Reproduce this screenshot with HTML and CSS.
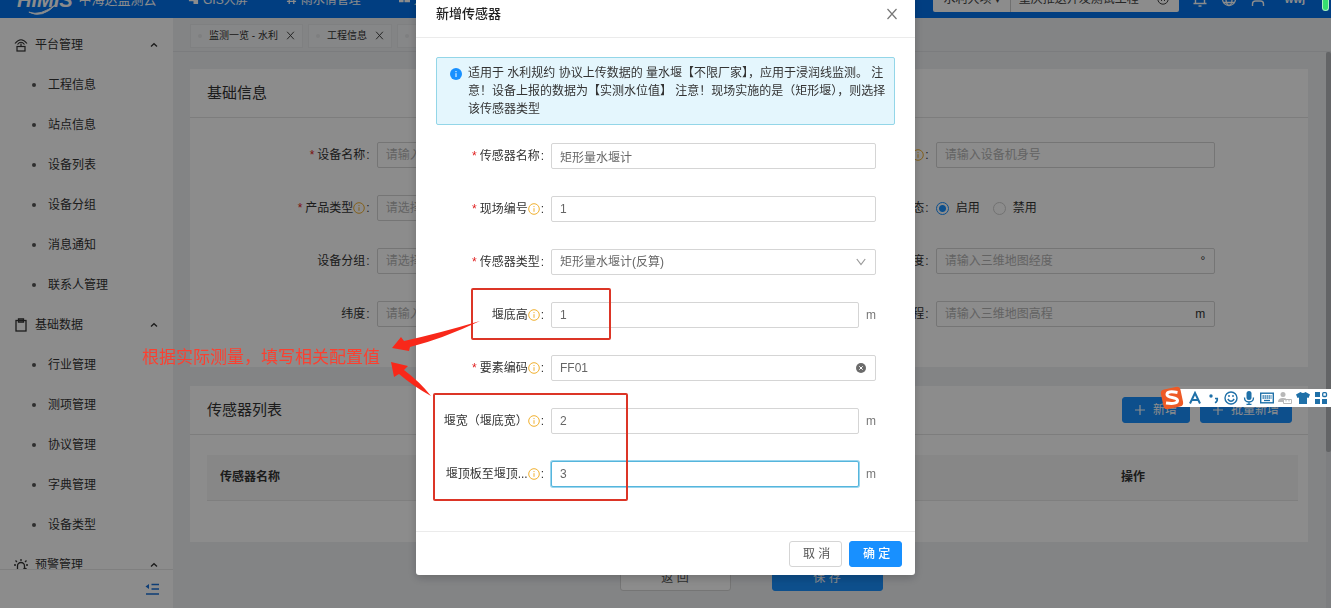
FILE: index.html
```html
<!DOCTYPE html>
<html lang="zh-CN">
<head>
<meta charset="utf-8">
<title>新增传感器</title>
<link rel="stylesheet" href="styles.css">
</head>
<body>
<svg class="defs" aria-hidden="true">
  <symbol id="i-info" viewBox="0 0 12 12"><circle cx="6" cy="6" r="5.3" fill="none" stroke="currentColor"/><path d="M6 5.2v3.6M6 3v1.1" stroke="currentColor"/></symbol>
  <symbol id="i-close" viewBox="0 0 12 12"><path d="M1.5 1l9 10M10.5 1l-9 10" stroke="currentColor" stroke-width="1.2" fill="none"/></symbol>
  <symbol id="i-up" viewBox="0 0 8 8"><path d="M1 5.5L4 2.700l3 2.800" stroke="currentColor" stroke-width="1.300" fill="none"/></symbol>
  <symbol id="i-plus" viewBox="0 0 10 10"><path d="M5 0v10M0 5h10" stroke="currentColor" stroke-width="1.200"/></symbol>
</svg>

<div class="app">
  <header class="topbar">
    <div class="topbar-inner">
      <div class="logo"><b>HiMIS</b><span>中海达监测云</span>
        <svg class="swoosh" viewBox="0 0 34 12"><path d="M1 9Q14 14 32 0Q16 17 1 9z" fill="#fff" stroke="#fff"/></svg>
      </div>
      <nav class="topnav">
        <a href="#"><svg viewBox="0 0 12 12"><path d="M1 1h4v4h6v6H6V8H1z" fill="currentColor"/></svg>GIS大屏</a>
        <a href="#"><svg viewBox="0 0 12 12"><path d="M1 4h10M1 8h10M3.500 1v10M8.500 1v10" stroke="currentColor" stroke-width="1.400"/></svg>雨水情管理</a>
        <a href="#"><svg viewBox="0 0 12 12"><path d="M0 2h5v7H0zM6 3h6v6H6z" fill="currentColor"/></svg>大坝安全</a>
      </nav>
      <div class="project">
        <button type="button" class="kind">水利大坝 <span class="caret">▾</span></button>
        <span class="project-name">重庆推送开发测试工程</span>
        <svg viewBox="0 0 12 12"><circle cx="6" cy="6" r="5.200" fill="none" stroke="currentColor"/><path d="M4 4l4 4M8 4l-4 4" stroke="currentColor"/></svg>
      </div>
      <div class="tools">
        <svg viewBox="0 0 16 16"><path d="M1.500 12.500h13M3.500 12.500V7a4.500 4.500 0 019 0v5.500M6.500 15h3" fill="none" stroke="currentColor" stroke-width="1.400"/></svg>
        <svg viewBox="0 0 16 16"><g fill="none" stroke="currentColor" stroke-width="1.300"><circle cx="8" cy="8" r="6.500"/><ellipse cx="8" cy="8" rx="3" ry="6.500"/><path d="M1.500 8h13M2.500 11.500h11M2.500 4.500h11"/></g></svg>
        <svg viewBox="0 0 16 16"><path d="M2.500 15v-2q0-3 3-3h5q3 0 3 3v2" fill="none" stroke="currentColor" stroke-width="1.400"/><circle cx="8" cy="5" r="3" fill="none" stroke="currentColor" stroke-width="1.400"/></svg>
        <b>wwj</b>
      </div>
    </div>
  </header>

  <div class="workspace">
    <aside class="sidebar">
      <nav class="menu">
        <a class="group" href="#"><svg class="gi" viewBox="0 0 14 14"><g fill="none" stroke="currentColor" stroke-width="1.200"><path d="M1 5.500Q7-2 13 5.500M3.500 6.500Q7 2 10.500 6.500"/><rect x="3" y="8.500" width="8" height="4.500"/><path d="M7 5.500v3"/></g></svg>平台管理<svg class="up"><use href="#i-up"/></svg></a>
        <a href="#">工程信息</a><a href="#">站点信息</a><a href="#">设备列表</a><a href="#">设备分组</a><a href="#">消息通知</a><a href="#">联系人管理</a>
        <a class="group" href="#"><svg class="gi" viewBox="0 0 14 14"><g fill="none" stroke="currentColor" stroke-width="1.300"><rect x="2" y="2.500" width="10" height="10.500"/><path d="M4.500 1h5v3h-5z"/></g></svg>基础数据<svg class="up"><use href="#i-up"/></svg></a>
        <a href="#">行业管理</a><a href="#">测项管理</a><a href="#">协议管理</a><a href="#">字典管理</a><a href="#">设备类型</a>
        <a class="group" href="#"><svg class="gi" viewBox="0 0 14 14"><g fill="none" stroke="currentColor" stroke-width="1.300"><path d="M3.500 13V8a3.500 3.500 0 017 0v2M1 13h7M7 3V1M3 4L1.500 2.500M11 4l1.500-1.500M2 7H0M14 7h-2"/><circle cx="11" cy="12" r="1.500"/></g></svg>预警管理<svg class="up"><use href="#i-up"/></svg></a>
      </nav>
      <div class="fold"><button type="button" aria-label="收起菜单"><svg viewBox="0 0 14 12"><path d="M6.500 1.500H14M6.500 6H14M1 11h13" stroke="currentColor" stroke-width="1.300"/><path d="M4 1v5L.5 3.500z" fill="currentColor"/></svg></button></div>
    </aside>

    <main class="main">
      <div class="tabs">
        <div class="tab"><i></i><span>监测一览 - 水利</span><button type="button" aria-label="关闭"><svg><use href="#i-close"/></svg></button></div>
        <div class="tab"><i></i><span>工程信息</span><button type="button" aria-label="关闭"><svg><use href="#i-close"/></svg></button></div>
        <div class="tab"><i></i><span>设备列表</span><button type="button" aria-label="关闭"><svg><use href="#i-close"/></svg></button></div>
      </div>
      <div class="scroll">
        <div class="content">
          <section class="card">
            <div class="card-head"><h2>基础信息</h2></div>
            <div class="base-form">
              <div class="item"><label for="b1"><em>*</em>设备名称<u>:</u></label><div class="field"><input id="b1" placeholder="请输入设备名称"></div></div>
              <div class="item"><label for="b2">机身号<svg class="tip"><use href="#i-info"/></svg><u>:</u></label><div class="field"><input id="b2" placeholder="请输入设备机身号"></div></div>
              <div class="item"><label for="b3"><em>*</em>产品类型<svg class="tip"><use href="#i-info"/></svg><u>:</u></label><div class="field"><input id="b3" placeholder="请选择产品类型"></div></div>
              <div class="item"><span class="lab">状态<u>:</u></span><div class="radios"><label><input type="radio" name="st" checked>启用</label><label><input type="radio" name="st">禁用</label></div></div>
              <div class="item"><label for="b4">设备分组<u>:</u></label><div class="field"><input id="b4" placeholder="请选择设备分组"></div></div>
              <div class="item"><label for="b5">经度<u>:</u></label><div class="field"><input id="b5" placeholder="请输入三维地图经度"><span>°</span></div></div>
              <div class="item"><label for="b6">纬度<u>:</u></label><div class="field"><input id="b6" placeholder="请输入三维地图纬度"></div></div>
              <div class="item"><label for="b7">高程<u>:</u></label><div class="field"><input id="b7" placeholder="请输入三维地图高程"><span>m</span></div></div>
            </div>
          </section>
          <section class="card">
            <div class="card-head"><h2>传感器列表</h2>
              <div class="head-actions">
                <button type="button" class="btn primary add"><svg><use href="#i-plus"/></svg>新增</button>
                <button type="button" class="btn primary add"><svg><use href="#i-plus"/></svg>批量新增</button>
              </div>
            </div>
            <div class="list"><table><thead><tr><th>传感器名称</th><th class="op">操作</th></tr></thead></table></div>
          </section>
          <div class="page-actions">
            <button type="button" class="btn wide">返 回</button>
            <button type="button" class="btn primary wide">保 存</button>
          </div>
        </div>
        <div class="scrollbar"><div class="thumb"></div></div>
      </div>
    </main>
  </div>
</div>

<div class="mask">
  <div class="modal" role="dialog" aria-labelledby="mt">
    <div class="modal-head"><h1 id="mt">新增传感器</h1><button type="button" aria-label="关闭"><svg><use href="#i-close"/></svg></button></div>
    <form class="modal-body">
      <div class="alert">
        <svg viewBox="0 0 12 12"><circle cx="6" cy="6" r="6" fill="#1890ff"/><path d="M6 5.200v3.800M6 3v1.200" stroke="#fff"/></svg>
        <p>适用于 水利规约 协议上传数据的 量水堰【不限厂家】，应用于浸润线监测。 注意！设备上报的数据为【实测水位值】 注意！现场实施的是（矩形堰），则选择该传感器类型</p>
      </div>
      <div class="row"><label for="m1"><em>*</em>传感器名称<u>:</u></label><div class="field"><input id="m1" value="矩形量水堰计"></div></div>
      <div class="row"><label for="m2"><em>*</em>现场编号<svg class="tip"><use href="#i-info"/></svg><u>:</u></label><div class="field"><input id="m2" value="1"></div></div>
      <div class="row"><label for="m3"><em>*</em>传感器类型<u>:</u></label><div class="field"><select id="m3"><option>矩形量水堰计(反算)</option></select><svg class="down" viewBox="0 0 10 8"><path d="M.8 1L5 6.500 9.200 1" fill="none" stroke="currentColor" stroke-width="1.200"/></svg></div></div>
      <div class="row"><label for="m4">堰底高<svg class="tip"><use href="#i-info"/></svg><u>:</u></label><div class="field"><input id="m4" value="1"></div><span class="unit">m</span></div>
      <div class="row"><label for="m5"><em>*</em>要素编码<svg class="tip"><use href="#i-info"/></svg><u>:</u></label><div class="field"><input id="m5" value="FF01"><svg class="clear" viewBox="0 0 10 10"><circle cx="5" cy="5" r="5" fill="#6b6b6b"/><path d="M3.300 3.300l3.400 3.400M6.700 3.300L3.300 6.700" stroke="#fff"/></svg></div></div>
      <div class="row"><label for="m6">堰宽（堰底宽）<svg class="tip"><use href="#i-info"/></svg><u>:</u></label><div class="field"><input id="m6" value="2"></div><span class="unit">m</span></div>
      <div class="row"><label for="m7">堰顶板至堰顶...<svg class="tip"><use href="#i-info"/></svg><u>:</u></label><div class="field focused"><input id="m7" value="3"></div><span class="unit">m</span></div>
    </form>
    <div class="modal-foot"><button type="button" class="btn">取 消</button><button type="button" class="btn primary">确 定</button></div>

    <div class="mark mark-height"></div>
    <div class="mark mark-width"></div>
    <svg class="arrows" viewBox="390 330 100 70"><path d="M392 348l9-11 3 4q36-8 76-20-38 18-70 26l-1 4zM391 362l17 4-4 4q16 12 27 26-18-10-32-22l-5 3z" fill="#f8281a"/></svg>
    <p class="note">根据实际测量，填写相关配置值</p>
  </div>
</div>

<div class="battery"></div>
<div class="ime">
  <svg class="ime-logo" viewBox="0 0 24 24"><rect x="2" y="2" width="20" height="20" rx="4" fill="#ee5a26" transform="rotate(-12 12 12)"/><path d="M17.500 6.500Q7 4.500 7 8.500c0 4 10.500 2 10.500 6q0 4-11.500 2.500" fill="none" stroke="#fff" stroke-width="3"/></svg>
  <svg viewBox="0 0 14 14"><path d="M2 12.500L7 2l5 10.500M4 9h6" fill="none" stroke="currentColor" stroke-width="2"/></svg>
  <svg viewBox="0 0 14 14"><circle cx="5" cy="5" r="1.700" fill="currentColor"/><path d="M9 7.500h2.300q.3 3-2.300 4.300" fill="none" stroke="currentColor" stroke-width="1.600"/></svg>
  <svg viewBox="0 0 14 14"><g fill="none" stroke="currentColor" stroke-width="1.400"><circle cx="7" cy="7" r="6"/><path d="M3.800 8q3.200 4.500 6.400 0M5 4v2M9 4v2"/></g></svg>
  <svg viewBox="0 0 14 14"><rect x="4.500" y="0" width="5" height="9" rx="2.500" fill="currentColor"/><path d="M2.500 6.500q0 4.500 4.500 4.500t4.500-4.500M7 11v3M4.500 13.300h5" fill="none" stroke="currentColor" stroke-width="1.300"/></svg>
  <svg viewBox="0 0 14 14"><rect x=".7" y="2.200" width="12.600" height="9.600" fill="none" stroke="currentColor" stroke-width="1.400"/><path d="M2.500 5h9M2.500 7h9" stroke="currentColor" stroke-width="1.300" stroke-dasharray="1.400 .6"/><path d="M4 9.500h6" stroke="currentColor" stroke-width="1.300"/></svg>
  <svg class="dim" viewBox="0 0 14 14"><circle cx="5" cy="3.500" r="2.500" fill="currentColor"/><path d="M0 11q0-4 5-4 2 0 3 .5V11z" fill="currentColor"/><path d="M5.500 8.500h8v4h-8zM8 8.500v2M11 8.500v2" fill="#fff" stroke="currentColor"/></svg>
  <svg viewBox="0 0 14 14"><path d="M4.500 1Q7 3 9.500 1L14 3.500 12.500 7 11 6.500V13H3V6.500L1.500 7 0 3.500z" fill="currentColor"/></svg>
  <svg viewBox="0 0 14 14"><path d="M1 1h5v5H1zM1 8h5v5H1zM8 8h5v5H8z" fill="currentColor"/><rect x="8.700" y="1.700" width="3.800" height="3.800" rx="1" fill="none" stroke="currentColor" stroke-width="1.300"/></svg>
</div>
</body>
</html>
```

FILE: styles.css
```css
* { box-sizing: border-box; }
body {
  margin: 0;
  font: 12px/18px "Liberation Sans", "Noto Sans CJK SC", sans-serif;
  color: #333;
  overflow: hidden;
}
h1, h2, p { margin: 0; font-weight: 400; }
a { color: inherit; text-decoration: none; }
em { font-style: normal; color: #e02020; margin-right: 3px; }
u { text-decoration: none; margin-left: 1px; }
button, input, select { font: inherit; color: inherit; }
button { cursor: pointer; }
svg { flex: none; }
.defs { position: absolute; width: 0; height: 0; }

.app { height: 100vh; display: flex; flex-direction: column; }

/* top bar, scrolled partly out of view */
.topbar { height: 18px; flex: none; background: #0272ec; color: #fff; display: flex; align-items: flex-end; overflow: hidden; }
.topbar-inner { flex: 1; height: 40px; display: flex; align-items: center; padding-right: 26px; }
.logo { position: relative; display: flex; align-items: center; gap: 6px; padding: 4px 0 0 17px; width: 188px; font-size: 13px; }
.logo b { font-size: 20px; font-style: italic; }
.swoosh { position: absolute; left: 28px; bottom: -6px; width: 30px; height: 11px; }
.topnav { display: flex; gap: 38px; padding-top: 3px; }
.topnav a { display: flex; align-items: center; gap: 4px; white-space: nowrap; }
.topnav svg { width: 11px; height: 11px; }
.project { margin-left: auto; height: 28px; display: flex; align-items: center; background: #fff; color: #444; border-radius: 2px; padding: 2px 10px 0 0; }
.project svg { width: 12px; height: 12px; margin-left: 18px; }
.kind { border: 0; border-right: 1px solid #ccc; background: none; height: 26px; padding: 0 10px; }
.caret { font-size: 10px; }
.project-name { padding-left: 8px; }
.tools { display: flex; align-items: center; gap: 13px; margin-left: 13px; padding-top: 2px; }
.tools svg { width: 16px; height: 16px; }
.tools b { margin-left: 6px; font-size: 11px; }

.workspace { flex: 1; min-height: 0; display: flex; }

/* side menu */
.sidebar { width: 173px; flex: none; background: #fff; display: flex; flex-direction: column; }
.menu { flex: 1; min-height: 0; overflow: hidden; padding-top: 7px; }
.menu a { display: flex; align-items: center; height: 40px; padding-left: 32px; }
.menu a::before { content: ""; width: 4px; height: 4px; border-radius: 50%; background: #555; margin-right: 12px; }
.menu .group { padding: 0 15px 0 14px; }
.menu .group::before { display: none; }
.gi { width: 14px; height: 14px; margin-right: 7px; }
.up { width: 8px; height: 8px; margin-left: auto; }
.fold { height: 39px; flex: none; border-top: 1px solid #e8e8e8; display: flex; align-items: center; justify-content: flex-end; padding-right: 14px; }
.fold button { border: 0; padding: 0; background: none; color: #1870d8; display: flex; }
.fold svg { width: 14px; height: 12px; }

/* page tabs */
.main { flex: 1; min-width: 0; display: flex; flex-direction: column; background: #eef0f3; }
.tabs { flex: none; height: 34px; display: flex; align-items: center; gap: 5px; padding: 2px 0 0 17px; border-bottom: 1px solid #e0e2e5; font-size: 10px; }
.tab { display: flex; align-items: center; height: 24px; padding: 0 7px; background: #f5f6f7; border: 1px solid #e8eaec; }
.tab i { width: 4px; height: 4px; border-radius: 50%; background: #e6e8ea; margin-right: 7px; }
.tab button { border: 0; background: none; padding: 0; margin-left: 8px; display: flex; }
.tab svg { width: 9px; height: 9px; }

.scroll { flex: 1; min-height: 0; display: flex; overflow: hidden; }
.content { flex: 1; padding: 17px 18px 0 17px; }
.scrollbar { width: 5px; flex: none; background: #e4e6e9; }
.thumb { height: 72%; background: #b4b6ba; border-radius: 2px; }

.card { background: #fff; margin-bottom: 19px; }
.card-head { height: 49px; display: flex; align-items: center; justify-content: space-between; padding: 0 16px 0 17px; border-bottom: 1px solid #e4e4e4; }
h2 { font-size: 15px; }
.head-actions { display: flex; gap: 10px; }

.base-form { display: grid; grid-template-columns: 1fr 1fr; row-gap: 27px; padding: 24px 0 40px; }
.item { display: flex; align-items: center; height: 26px; }
.item > label, .lab { width: 33.4%; padding-right: 7px; display: flex; align-items: center; justify-content: flex-end; }
.item .field { flex: 0 0 50%; }
.radios { display: flex; gap: 13px; }
.radios label { display: flex; align-items: center; gap: 7px; }
.radios input { appearance: none; width: 13px; height: 13px; margin: 0; border: 1px solid #d0d0d0; border-radius: 50%; }
.radios input:checked { border-color: #1890ff; background: radial-gradient(circle, #1890ff 3px, #fff 4px); }

.field { flex: 1; min-width: 0; height: 26px; display: flex; align-items: center; border: 1px solid #d5d5d5; border-radius: 2px; padding-right: 9px; background: #fff; }
.field input, .field select { flex: 1; min-width: 0; height: 100%; border: 0; outline: 0; background: none; padding: 0 8px; appearance: none; }
.field input::placeholder { color: #b5b5b5; }
.tip { width: 12px; height: 12px; color: #f0b030; }

.list { padding: 20px 10px 41px 17px; }
table { width: 100%; border-collapse: collapse; table-layout: fixed; }
th { height: 45px; padding: 0 13px; text-align: left; background: #f6f6f6; border-bottom: 1px solid #e8e8e8; }
.op { width: 190px; }

.btn { height: 26px; padding: 0 13px; border: 1px solid #d5d5d5; border-radius: 3px; background: #fff; color: #555; white-space: nowrap; }
.btn.primary { background: #1890ff; border-color: #1890ff; color: #fff; }
.add { display: flex; align-items: center; gap: 8px; padding: 0 12px; }
.add svg { width: 10px; height: 10px; }
.page-actions { display: flex; justify-content: center; gap: 41px; padding: 4px 0 0 4px; }
.wide { width: 111px; }

/* dialog */
.mask { position: fixed; inset: 0; background: rgba(0, 0, 0, .45); display: flex; align-items: flex-start; justify-content: center; }
.modal { position: relative; width: 499px; margin-top: -10px; background: #fff; border-radius: 3px; box-shadow: 0 3px 10px rgba(0, 0, 0, .2); }
.modal-head { height: 48px; display: flex; align-items: center; justify-content: space-between; padding: 0 17px 0 20px; border-bottom: 1px solid #ebebeb; }
h1 { font-size: 13px; font-weight: 500; color: #222; }
.modal-head button { border: 0; background: none; padding: 0; display: flex; color: #777; }
.modal-head svg { width: 12px; height: 12px; }
.modal-body { padding: 19px 20px 44px; display: flex; flex-direction: column; gap: 27px; }
.alert { display: flex; padding: 6px 4px 6px 13px; margin-bottom: -9px; background: #e4f6fd; border: 1px solid #93d6e8; border-radius: 2px; }
.alert svg { width: 12px; height: 12px; margin: 4px 6px 0 0; }
.row { display: flex; align-items: center; padding-right: 19px; }
.row label { width: 115px; padding-right: 7px; display: flex; align-items: center; justify-content: flex-end; white-space: nowrap; }
.row .field { color: #666; }
.unit { margin-left: 7px; color: #777; }
.focused { border-color: #55b5dc; box-shadow: 0 0 0 1px #9bd6ee; }
.down { width: 10px; height: 8px; color: #999; }
.clear { width: 10px; height: 10px; }
.modal-foot { height: 44px; display: flex; align-items: center; justify-content: flex-end; gap: 7px; padding-right: 13px; border-top: 1px solid #ebebeb; }
.modal-foot .btn { width: 53px; }
.modal-foot .primary { font-weight: 500; }

/* annotations drawn over the dialog */
.mark { position: absolute; border: 2px solid #dc3526; border-radius: 2px; pointer-events: none; }
.mark-height { left: 55px; top: 298px; width: 140px; height: 52px; }
.mark-width { left: 17px; top: 403px; width: 195px; height: 108px; }
.arrows { position: absolute; left: -26px; top: 340px; width: 100px; height: 70px; overflow: visible; pointer-events: none; }
.note { position: absolute; left: -274px; top: 356px; font-size: 17px; line-height: 24px; color: #fb4030; white-space: nowrap; }

/* desktop widgets */
.battery { position: fixed; right: 2px; top: 0; width: 7px; height: 11px; background: #35e070; border: 1px solid #a8f5c0; border-top: 0; border-radius: 0 0 4px 4px; }
.ime { position: fixed; right: 0; top: 389px; height: 18px; display: flex; align-items: center; gap: 4px; padding: 0 3px 0 0; background: #fff; color: #1f70a8; }
.ime svg { width: 14px; height: 14px; }
.ime .ime-logo { width: 24px; height: 24px; margin-left: -12px; }
.ime .dim { color: #b8b8b8; }
```
